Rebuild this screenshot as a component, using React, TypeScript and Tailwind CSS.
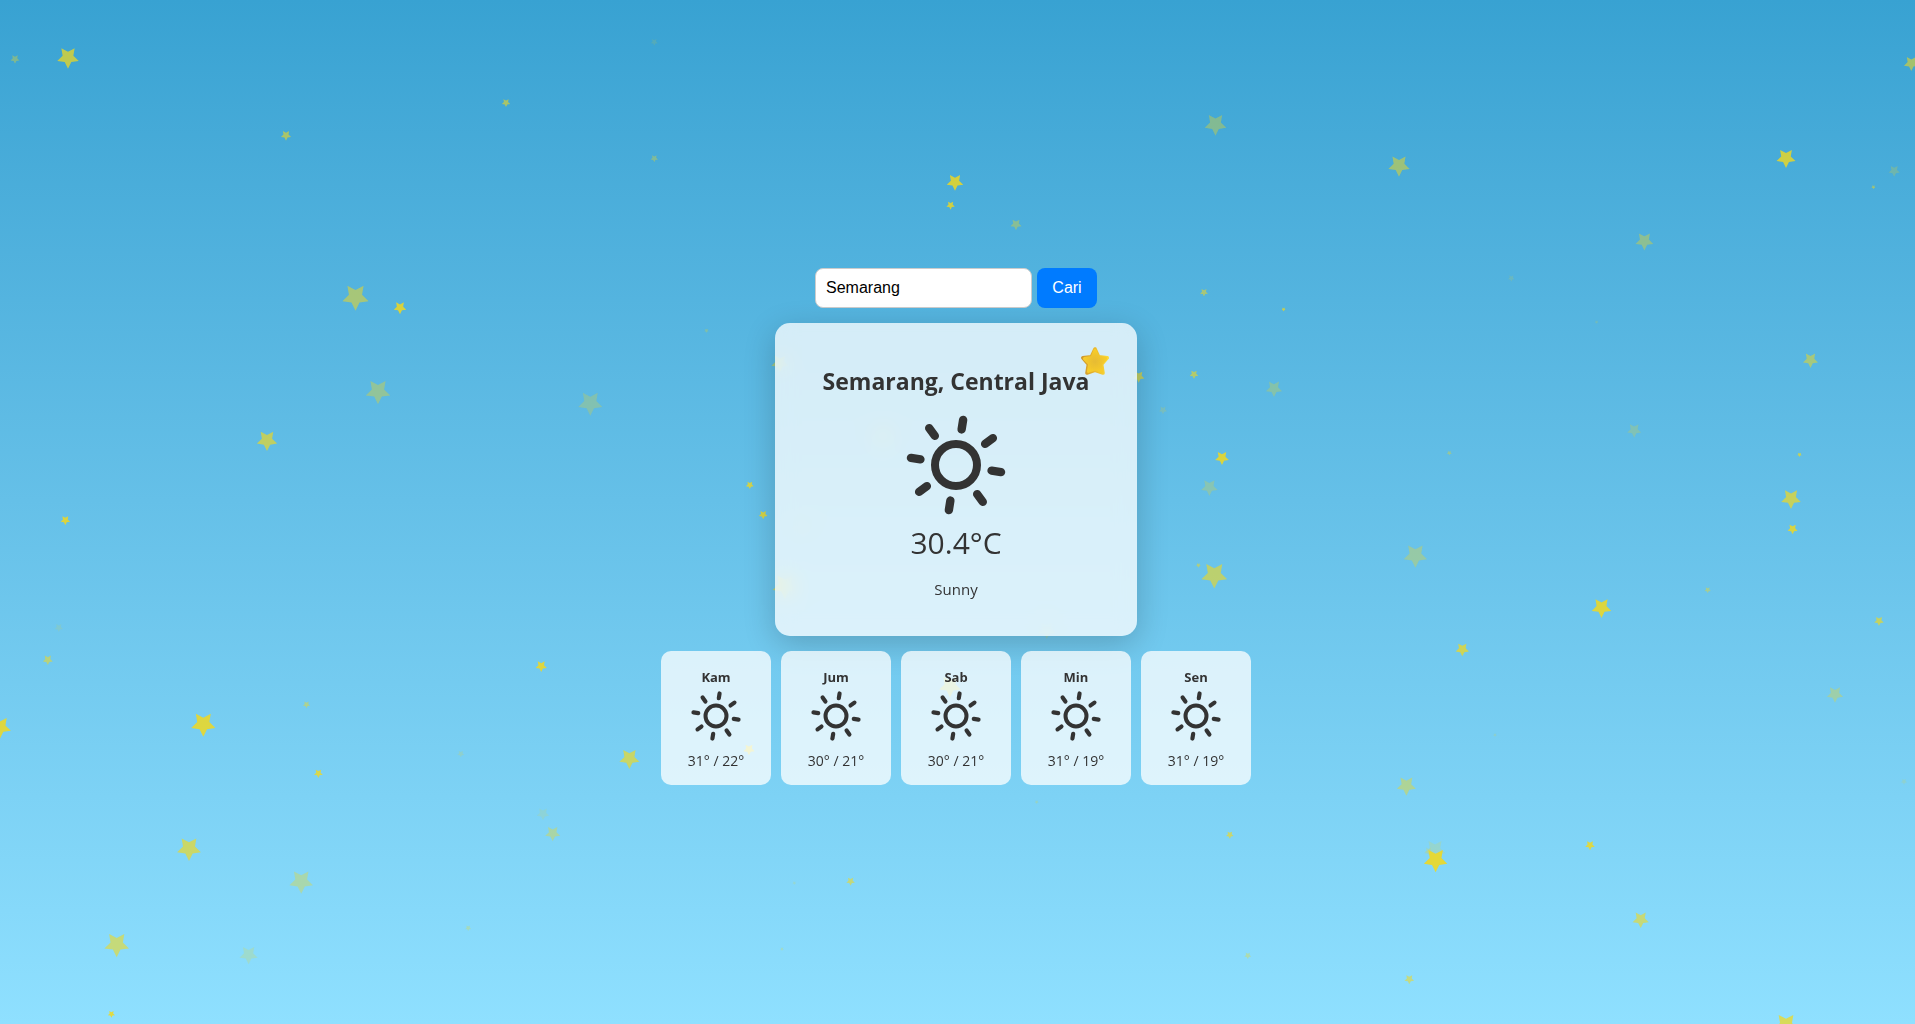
import { useState } from "react";

type Star = [x: number, y: number, radius: number, opacity: number];

const STARS: Star[] = [
  [15, 59, 4.7, 0.4], [68, 57.4, 11.3, 0.8], [506, 102.7, 4.4, 0.65], [286, 135.4, 5.3, 0.65],
  [355.5, 297, 13.8, 0.58], [400, 307.7, 6.6, 0.92], [378, 391.4, 12.9, 0.4], [590.3, 403, 12.7, 0.28],
  [267, 440.3, 10.7, 0.72], [654.3, 42, 3.7, 0.15], [654.3, 158.4, 3.9, 0.38], [1215.5, 124.3, 11.4, 0.4],
  [955, 182, 8.7, 0.9], [950.6, 205.3, 4.4, 0.88], [1016, 224.4, 5.9, 0.4], [1204, 292.4, 4.2, 0.58],
  [706.5, 330.6, 2.4, 0.3], [780, 363, 9, 0.5], [1138.7, 376.6, 6.1, 0.7], [1194, 374.4, 4.6, 0.65],
  [1274, 388.5, 8.5, 0.3], [1163, 410, 4.2, 0.2], [1222, 457.8, 7.2, 0.92], [1209.4, 487.3, 8.7, 0.28],
  [749.8, 485, 4.1, 0.85], [763.2, 514.7, 4.6, 0.88], [1399, 165.5, 11.2, 0.56], [1786, 158, 10, 0.88],
  [1911.3, 63.3, 7.7, 0.62], [1894.2, 170.8, 5.9, 0.25], [1873.4, 187.1, 2.2, 0.55], [1644.4, 241, 9.4, 0.42],
  [1511.3, 278.2, 3.5, 0.17], [1283.6, 309.4, 2.2, 0.75], [1596.6, 322, 2, 0.2], [1810.5, 360, 7.9, 0.56],
  [1634.2, 430.3, 7.4, 0.25], [1449.3, 453, 2.6, 0.4], [1799.5, 454.6, 2.4, 0.8], [1791, 498.7, 10.3, 0.76],
  [65.3, 520.3, 5, 0.92], [58.8, 627.6, 4.4, 0.14], [47.8, 659.8, 5.2, 0.6], [541.2, 666.1, 5.9, 0.92],
  [306.5, 704.6, 3.7, 0.5], [203.3, 724, 12.7, 0.92], [0, 727.2, 11.4, 0.92], [460.8, 753.8, 3.5, 0.2],
  [629.4, 758.5, 10.5, 0.72], [318.4, 773.4, 4.6, 0.85], [543, 813.8, 6.5, 0.15], [552.7, 833.4, 7.9, 0.4],
  [189, 848.5, 12.5, 0.72], [301.2, 881.4, 12.3, 0.38], [468.2, 928, 3, 0.3], [116.7, 944.4, 12.9, 0.64],
  [248.6, 954.7, 9.6, 0.22], [111.4, 1014, 3.7, 0.92], [1198.4, 565.2, 2.5, 0.55], [1214.3, 575, 13.6, 0.66],
  [785, 586, 13, 0.6], [1036.7, 802, 2, 0.25], [1229.8, 834.8, 3.9, 0.7], [850.6, 881.3, 4.4, 0.62],
  [794.3, 883, 2, 0.2], [782, 949, 2, 0.25], [1247.8, 955.5, 3.5, 0.38], [950, 686, 11.4, 0.5],
  [749, 749.4, 5.9, 0.8], [883, 435, 13, 0.28], [1046.7, 630, 9, 0.2], [802, 525, 11, 0.15],
  [1415.4, 555.4, 12.3, 0.36], [1792.6, 529, 5.3, 0.9], [1707.7, 590, 3.3, 0.45], [1601.5, 607.7, 10.3, 0.92],
  [1879, 621, 5, 0.72], [1462.3, 649.3, 7, 0.8], [1835, 694.2, 8.5, 0.36], [1495, 735, 2, 0.2],
  [1406.4, 785.7, 10, 0.48], [1904, 781.6, 3.1, 0.18], [1435, 849.9, 11, 0.2], [1428.5, 851, 4, 0.25],
  [1435.6, 860, 12.3, 0.97], [1590, 845.3, 5, 0.9], [1640.7, 919.5, 8.5, 0.65], [1409.3, 979.3, 5, 0.6],
  [1786, 1025, 12.5, 0.8],
];

const FORECAST = [
  { day: "Kam", temps: "31° / 22°" },
  { day: "Jum", temps: "30° / 21°" },
  { day: "Sab", temps: "30° / 21°" },
  { day: "Min", temps: "31° / 19°" },
  { day: "Sen", temps: "31° / 19°" },
];

function starPoints(x: number, y: number, radius: number) {
  return Array.from({ length: 10 }, (_, i) => {
    const r = i % 2 === 0 ? radius : radius / 2;
    const a = Math.PI / 2 + (i * Math.PI) / 5;
    return `${(x + r * Math.cos(a)).toFixed(2)},${(y + r * Math.sin(a)).toFixed(2)}`;
  }).join(" ");
}

function StarField() {
  return (
    <svg className="pointer-events-none absolute inset-0 h-full w-full opacity-90" aria-hidden="true">
      {STARS.map(([x, y, r, opacity], i) => (
        <polygon key={i} points={starPoints(x, y, r)} fill="#f3d91c" opacity={opacity} />
      ))}
    </svg>
  );
}

function SunIcon({ className }: { className: string }) {
  return (
    <svg viewBox="-50 -50 100 100" className={className} fill="none" stroke="currentColor" aria-hidden="true">
      <circle r="21" strokeWidth="8" />
      <g strokeWidth="8.4" strokeLinecap="round">
        {[0, 45, 90, 135, 180, 225, 270, 315].map((a) => (
          <line key={a} x1="0" y1="-36" x2="0" y2="-45.6" transform={`rotate(${a + 9})`} />
        ))}
      </g>
    </svg>
  );
}

function FavoriteStar() {
  return (
    <svg viewBox="0 0 32 32" className="size-8" aria-hidden="true">
      <defs>
        <radialGradient id="star-face" cx="50%" cy="52%" r="50%">
          <stop offset="0" stopColor="#e6bb34" />
          <stop offset="0.6" stopColor="#efc42e" />
          <stop offset="1" stopColor="#f6cb2a" />
        </radialGradient>
        <linearGradient id="star-edge" x1="0" y1="0" x2="1" y2="0">
          <stop offset="0" stopColor="#cf982c" />
          <stop offset="0.5" stopColor="#eab82e" />
          <stop offset="1" stopColor="#fbd835" />
        </linearGradient>
      </defs>
      <path
        d="M16 4 19.6 11.8 28.2 12.9 22.6 19.2 24 28 16 25.4 8 28 9.4 19.2 3.8 12.9 12.4 11.8Z"
        fill="url(#star-edge)"
        stroke="url(#star-edge)"
        strokeWidth="3.6"
        strokeLinejoin="round"
      />
      <path
        d="M16 5.4 19 12.6 26.6 13.6 21.4 19 22.6 26.4 16 24 9.4 26.4 10.6 19 5.4 13.6 13 12.6Z"
        fill="url(#star-face)"
        stroke="url(#star-face)"
        strokeWidth="3"
        strokeLinejoin="round"
      />
    </svg>
  );
}

export default function App() {
  const [city, setCity] = useState("Semarang");

  return (
    <main className="relative flex min-h-screen flex-col items-center justify-center gap-[15px] overflow-hidden bg-linear-to-b from-[#38a2d2] to-[#8fe0ff] pt-7 pr-[3px] font-['Open_Sans','Noto_Sans',sans-serif] text-[#333]">
      <StarField />

      <form
        className="relative flex gap-[5px] font-['Liberation_Sans',Arial,sans-serif] text-base"
        onSubmit={(e) => e.preventDefault()}
      >
        <input
          type="text"
          aria-label="Kota"
          value={city}
          onChange={(e) => setCity(e.target.value)}
          className="h-10 w-[217px] rounded-lg border border-[#ccc] bg-white px-[10px] text-black outline-none"
        />
        <button type="submit" className="h-10 w-[60px] rounded-lg bg-[#007bff] text-white">
          Cari
        </button>
      </form>

      <section className="relative flex w-[362px] flex-col items-center rounded-[15px] bg-white/75 pt-[42px] pb-[35px] shadow-[0_8px_32px_rgba(0,0,0,0.2)] backdrop-blur-[10px]">
        <button type="button" aria-label="Favorit" className="absolute top-[22px] right-[26px]">
          <FavoriteStar />
        </button>
        <h1 className="text-[23px] leading-8 font-bold">Semarang, Central Java</h1>
        <SunIcon className="mt-[18px] size-[100px]" />
        <p className="mt-2 text-[30px] leading-10">30.4°C</p>
        <p className="mt-[14px] text-[15px] leading-6">Sunny</p>
      </section>

      <ul className="relative flex gap-[10px]">
        {FORECAST.map(({ day, temps }) => (
          <li key={day} className="flex w-[110px] flex-col items-center rounded-[10px] bg-white/75 pt-4 pb-[14px] text-sm leading-5">
            <strong className="text-[13px]">{day}</strong>
            <SunIcon className="mt-1 size-[50px]" />
            <span className="mt-[10px]">{temps}</span>
          </li>
        ))}
      </ul>
    </main>
  );
}
